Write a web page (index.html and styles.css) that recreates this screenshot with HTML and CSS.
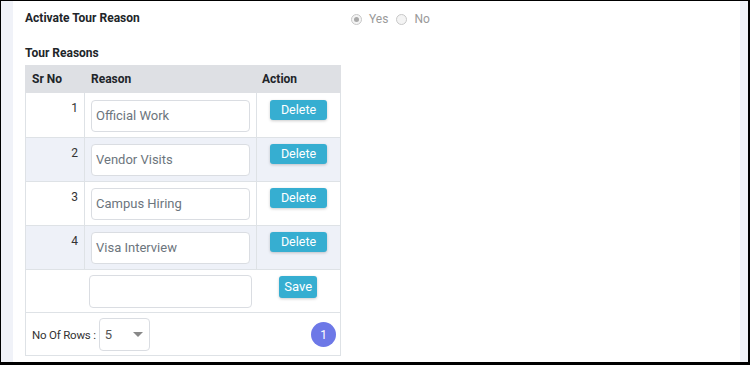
FILE: index.html
```html
<!DOCTYPE html>
<html>
<head>
<meta charset="utf-8">
<link rel="stylesheet" href="styles.css">
</head>
<body>
<div class="frame">
  <div class="side"></div>
  <main class="content">
    <div class="toprow">
      <div class="label">Activate Tour Reason</div>
      <div class="radios">
        <span class="radio checked"></span><span class="rtext">Yes</span>
        <span class="radio"></span><span class="rtext">No</span>
      </div>
    </div>
    <div class="section">Tour Reasons</div>
    <table class="grid">
      <thead>
        <tr><th class="c1">Sr No</th><th class="c2">Reason</th><th class="c3">Action</th></tr>
      </thead>
      <tbody>
        <tr class="first"><td class="num">1</td><td><div class="inp">Official Work</div></td><td class="act"><button class="btn">Delete</button></td></tr>
        <tr class="alt"><td class="num">2</td><td><div class="inp">Vendor Visits</div></td><td class="act"><button class="btn">Delete</button></td></tr>
        <tr><td class="num">3</td><td><div class="inp">Campus Hiring</div></td><td class="act"><button class="btn">Delete</button></td></tr>
        <tr class="alt"><td class="num">4</td><td><div class="inp">Visa Interview</div></td><td class="act"><button class="btn">Delete</button></td></tr>
        <tr class="saverow"><td class="empty"></td><td class="newcell"><div class="inp new"></div></td><td class="act saveact"><button class="btn save">Save</button></td></tr>
        <tr class="foot"><td colspan="3">
          <div class="footer">
            <span class="rows">No Of Rows :</span>
            <div class="select"><span>5</span><span class="caret"></span></div>
            <span class="page">1</span>
          </div>
        </td></tr>
      </tbody>
    </table>
  </main>
  <div class="side right"></div>
</div>
</body>
</html>
```
FILE: styles.css
```css
html, body { margin: 0; padding: 0; }
body { font-family: Roboto, "Liberation Sans", sans-serif; color: #212529; background: #fff; }
.frame {
  box-sizing: border-box;
  width: 750px; height: 365px;
  border-top: 1px solid #000; border-left: 1px solid #000;
  border-right: 2px solid #000; border-bottom: 3px solid #000;
  display: flex; overflow: hidden;
}
.side { width: 12px; background: #f0f2f8; flex: none; }
.side.right { width: 8px; }
.content { flex: 1; padding: 0 12px; background: #fff; }
.toprow { display: flex; height: 34px; align-items: flex-start; padding-top: 10px; box-sizing: border-box; }
.label { font-size: 12px; font-weight: 700; width: 326px; line-height: 14px; }
.radios { display: flex; align-items: center; font-size: 12px; color: #9a9a9a; line-height: 14px; padding-top: 1px; }
.radio { width: 9px; height: 9px; border: 1px solid #c8c8c8; border-radius: 50%; background: #f4f4f4; display: inline-block; position: relative; }
.radio.checked::after { content: ""; position: absolute; left: 2px; top: 2px; width: 5px; height: 5px; border-radius: 50%; background: #a8a8a8; }
.rtext { margin: 0 8px 0 7px; }
.section { font-size: 12px; font-weight: 700; line-height: 14px; margin-top: 11px; height: 19px; }
.grid { border-collapse: collapse; width: 316px; font-size: 12px; }
.grid th { background: #dee0e4; text-align: left; font-weight: 700; height: 27px; padding: 0 6px; box-sizing: border-box; border: 1px solid #dee0e4; }
.grid th.c1 { width: 59px; }
.grid th.c2 { width: 172px; }
.grid th.c3 { padding-left: 5px; }
.grid td { border: 1px solid #dee2e6; padding: 6px 6px 5px; vertical-align: top; height: 43px; box-sizing: border-box; }
.grid tr.first td { height: 44px; padding-top: 7px; }
.grid tr.alt td { background: #eef1f8; }
.num { text-align: right; font-size: 12px; color: #333; padding-top: 8px !important; }
.inp { box-sizing: border-box; height: 32px; border: 1px solid #dadde2; border-radius: 4px; background: #fff; color: #6c757d; font-size: 13px; line-height: 30px; padding: 0 4px; }
.act { text-align: center; }
.btn { font-family: Roboto, "Liberation Sans", sans-serif; background: #36aed1; color: #fff; border: none; border-radius: 3px; font-size: 12.5px; padding: 0 6px; height: 20px; line-height: 20px; box-shadow: 0 1px 3px rgba(0,0,0,0.2); cursor: pointer; }
.act .btn { width: 57px; }
.saverow td { height: 42px !important; border-left: none; border-right: none; padding-top: 5px; padding-bottom: 4px; }
.saverow td.empty { border-left: 1px solid #dee2e6; }
.saverow td.saveact { border-right: 1px solid #dee2e6; padding-top: 6px; }
.saverow td.newcell { padding-left: 4px; padding-right: 5px; }
.inp.new { height: 33px; }
.act .btn.save { width: 38px; height: 22px; line-height: 22px; font-size: 13px; padding: 0; }
.foot td { height: 43px !important; padding: 5px 4px 4px 6px; vertical-align: middle; }
.footer { display: flex; align-items: center; }
.rows { font-size: 11.5px; color: #333; white-space: nowrap; flex: none; margin-right: 3px; letter-spacing: -0.2px; }
.select { box-sizing: border-box; width: 51px; height: 33px; border: 1px solid #dadde2; border-radius: 4px; display: flex; align-items: center; justify-content: space-between; padding: 0 6px 0 5px; font-size: 13px; color: #555; }
.caret { width: 0; height: 0; border-left: 5px solid transparent; border-right: 5px solid transparent; border-top: 5px solid #888; }
.page { margin-left: auto; width: 25px; height: 25px; border-radius: 50%; background: #6d78e7; color: #fff; font-size: 12px; display: flex; align-items: center; justify-content: center; }
```
